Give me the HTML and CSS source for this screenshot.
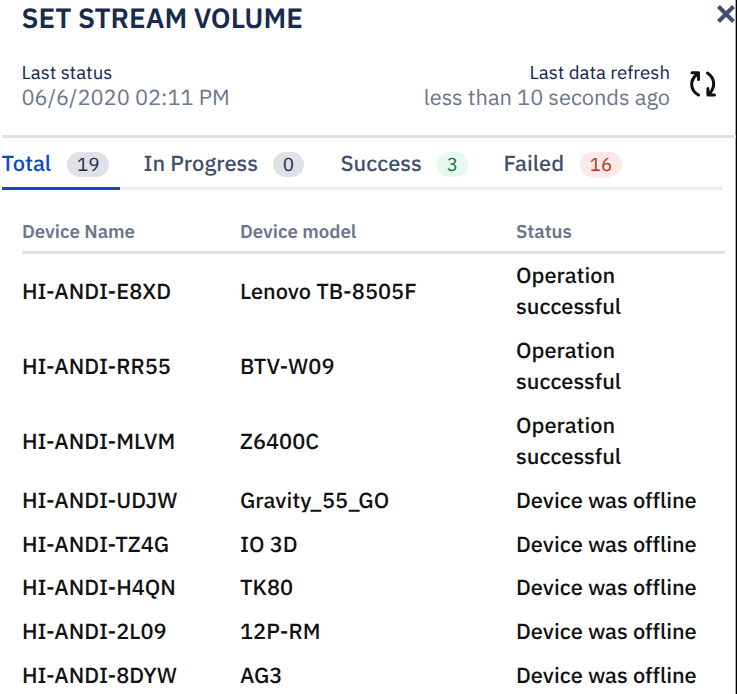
FILE: index.html
```html
<!DOCTYPE html>
<html lang="en">
<head>
<meta charset="utf-8">
<title>Set stream volume</title>
<link rel="stylesheet" href="styles.css">
</head>
<body>
<main class="panel">
  <header class="header">
    <h1 class="title">SET STREAM VOLUME</h1>
    <button class="close" aria-label="Close"><svg width="20" height="20" viewBox="0 0 20 20"><path d="M2.5 2.5 17.5 17.5M17.5 2.5 2.5 17.5" fill="none" stroke="#42526e" stroke-width="4.2"/></svg></button>
  </header>
  <section class="summary">
    <div class="info"><div class="label"><span>Last status</span></div><div class="value date"><span>06/6/2020 02:11 PM</span></div></div>
    <div class="info right"><div class="label"><span>Last data refresh</span></div><div class="value ago"><span>less than 10 seconds ago</span></div></div>
    <button class="refresh" aria-label="Refresh"><svg width="28" height="28" viewBox="0 0 28 28" fill="none" stroke="#111" stroke-width="3" stroke-linecap="round" stroke-linejoin="round"><path d="M9.500 25C4 22 2 17 3 11.500Q4.200 7 8.800 3.500M3 2.800H9.500V9.500M18.500 3C23 6 25.500 10.500 24.400 16.500Q23.500 21 19.500 24.500M25.500 25H18.900V18.500"/></svg></button>
  </section>
  <nav class="tabs">
    <a class="tab active"><span>Total</span><b class="badge">19</b></a>
    <a class="tab progress"><span>In Progress</span><b class="badge">0</b></a>
    <a class="tab success"><span>Success</span><b class="badge green">3</b></a>
    <a class="tab failed"><span>Failed</span><b class="badge red">16</b></a>
  </nav>
  <section class="table">
    <div class="row head"><span>Device Name</span><span>Device model</span><span>Status</span></div>
    <div class="row"><span>HI-ANDI-E8XD</span><span>Lenovo TB-8505F</span><span>Operation<br>successful</span></div>
    <div class="row"><span>HI-ANDI-RR55</span><span>BTV-W09</span><span>Operation<br>successful</span></div>
    <div class="row"><span>HI-ANDI-MLVM</span><span>Z6400C</span><span>Operation<br>successful</span></div>
    <div class="row"><span>HI-ANDI-UDJW</span><span>Gravity_55_GO</span><span>Device was offline</span></div>
    <div class="row"><span>HI-ANDI-TZ4G</span><span>IO 3D</span><span>Device was offline</span></div>
    <div class="row"><span>HI-ANDI-H4QN</span><span>TK80</span><span>Device was offline</span></div>
    <div class="row"><span>HI-ANDI-2L09</span><span>12P-RM</span><span>Device was offline</span></div>
    <div class="row"><span>HI-ANDI-8DYW</span><span>AG3</span><span>Device was offline</span></div>
  </section>
</main>
</body>
</html>
```
FILE: styles.css
```css
* { box-sizing: border-box; }
body { margin: 0; background: #fff; overflow: hidden; font-family: "IBM Plex Sans", "Noto Sans", sans-serif; text-rendering: geometricPrecision; }
.panel { width: 737px; height: 694px; overflow: hidden; border-right: 1px solid #000; box-shadow: inset -1px 0 #aaa; }
button { border: 0; background: none; padding: 0; }
svg { display: block; }
.header { display: flex; justify-content: space-between; height: 54px; padding-left: 21.500px; }
.title { margin: 0; font-size: 27.850px; line-height: 35px; font-weight: 600; color: #172b4d; white-space: nowrap; }
.close { width: 20px; height: 20px; margin-top: 4px; }
.summary { display: flex; height: 84px; margin-left: 2px; padding: 7px 19px 0 19.500px; border-bottom: 3px solid #dfe1e6; white-space: nowrap; }
.right { margin-left: auto; text-align: right; }
.label { font-size: 18.650px; line-height: 25px; color: #12244f; }
.value { font-size: 21.800px; line-height: 23px; color: #6b778c; }
.refresh { width: 28px; height: 28px; margin: 9px 0 0 19px; }
.tabs { display: grid; grid-template-columns: 142px 197px 163px 1fr; height: 52px; margin: 0 13px 0 1.500px; box-shadow: inset 0 -3px #ebecf0; }
.tab { display: flex; align-items: center; font-size: 21.850px; font-weight: 500; color: #42526e; height: 52px; padding-bottom: 1px; white-space: nowrap; }
.active { width: 118px; color: #0c4bc4; box-shadow: inset 0 -3px #0c4bc4; }
.badge { height: 25px; margin: 1px 0 0 auto; padding: 0 9.500px; border-radius: 13px; background: #dfe1e6; color: #172b4d; font-size: 18.800px; line-height: 26px; font-weight: 400; }
.active .badge { margin-right: 10.500px; }
.progress .badge { margin-right: 37px; }
.success .badge { margin-right: 36px; }
.failed .badge { margin-left: 16px; }
.green { background: #e7f9ef; color: #216e4e; }
.red { background: #fae9e6; color: #b23c20; }
.table { padding: 0 11.500px 0 22px; }
.row { display: grid; grid-template-columns: 218px 276px 1fr; align-items: center; padding: 6.750px 0 5.750px; font-size: 21.800px; line-height: 31.200px; font-weight: 500; color: #111; white-space: nowrap; }
.head { height: 63.500px; padding: 24.500px 0 0; border-bottom: 3px solid #dfe1e6; font-size: 18.650px; font-weight: 600; color: #6b778c; }
```
